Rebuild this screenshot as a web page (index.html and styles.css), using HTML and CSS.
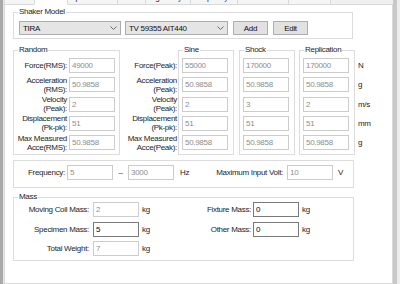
FILE: index.html
```html
<!DOCTYPE html>
<html lang="en">
<head>
    <meta charset="UTF-8">
    <meta name="viewport" content="width=device-width, initial-scale=1.0">
    <title>Shaker Settings</title>
    <link rel="stylesheet" href="styles.css">
</head>
<body>
    <div class="window">
        <div class="edge-left"></div>
        <div class="main">
            <div class="tabs">
                <div class="tab">Units</div>
                <div class="tab active">Shaker</div>
                <div class="tab">Input Channel</div>
                <div class="tab">Limits</div>
                <div class="tab">Signal Style</div>
                <div class="tab">Graph Style</div>
                <div class="tab">Measurements</div>
                <div class="tab">Tree Control</div>
                <div class="tab-fill"></div>
            </div>

            <div class="page">
                <fieldset class="group shaker">
                    <legend>Shaker Model</legend>
                    <div class="shaker-row">
                        <div class="combo combo-make">
                            <span>TIRA</span>
                            <svg width="7" height="4" viewBox="0 0 7 4"><polyline points="0.5,0.5 3.5,3.5 6.5,0.5" fill="none" stroke="#6a6a6a" stroke-width="1"/></svg>
                        </div>
                        <div class="combo combo-model">
                            <span>TV 59355 AIT440</span>
                            <svg width="7" height="4" viewBox="0 0 7 4"><polyline points="0.5,0.5 3.5,3.5 6.5,0.5" fill="none" stroke="#6a6a6a" stroke-width="1"/></svg>
                        </div>
                        <button class="btn btn-add">Add</button>
                        <button class="btn">Edit</button>
                    </div>
                </fieldset>

                <div class="ratings">
                    <fieldset class="group random">
                        <legend>Random</legend>
                        <div class="random-grid">
                            <label>Force(RMS):</label>
                            <input class="field" type="text" value="49000" disabled>
                            <label>Acceleration<br>(RMS):</label>
                            <input class="field" type="text" value="50.9858" disabled>
                            <label>Velocity<br>(Peak):</label>
                            <input class="field" type="text" value="2" disabled>
                            <label>Displacement<br>(Pk-pk):</label>
                            <input class="field" type="text" value="51" disabled>
                            <label>Max Measured<br>Acce(RMS):</label>
                            <input class="field" type="text" value="50.9858" disabled>
                        </div>
                    </fieldset>

                    <div class="side-labels">
                        <label>Force(Peak):</label>
                        <label>Acceleration<br>(Peak):</label>
                        <label>Velocity<br>(Peak):</label>
                        <label>Displacement<br>(Pk-pk):</label>
                        <label>Max Measured<br>Acce(Peak):</label>
                    </div>

                    <fieldset class="group column">
                        <legend>Sine</legend>
                        <div class="column-grid">
                            <input class="field" type="text" value="55000" disabled>
                            <input class="field" type="text" value="50.9858" disabled>
                            <input class="field" type="text" value="2" disabled>
                            <input class="field" type="text" value="51" disabled>
                            <input class="field" type="text" value="50.9858" disabled>
                        </div>
                    </fieldset>

                    <fieldset class="group column">
                        <legend>Shock</legend>
                        <div class="column-grid">
                            <input class="field" type="text" value="170000" disabled>
                            <input class="field" type="text" value="50.9858" disabled>
                            <input class="field" type="text" value="3" disabled>
                            <input class="field" type="text" value="51" disabled>
                            <input class="field" type="text" value="50.9858" disabled>
                        </div>
                    </fieldset>

                    <fieldset class="group column">
                        <legend>Replication</legend>
                        <div class="column-grid">
                            <input class="field" type="text" value="170000" disabled>
                            <input class="field" type="text" value="50.9858" disabled>
                            <input class="field" type="text" value="2" disabled>
                            <input class="field" type="text" value="51" disabled>
                            <input class="field" type="text" value="50.9858" disabled>
                        </div>
                    </fieldset>

                    <div class="units">
                        <span>N</span>
                        <span>g</span>
                        <span>m/s</span>
                        <span>mm</span>
                        <span>g</span>
                    </div>
                </div>

                <fieldset class="group frequency">
                    <div class="frequency-row">
                        <label>Frequency:</label>
                        <input class="field" type="text" value="5" disabled>
                        <span class="dash">–</span>
                        <input class="field" type="text" value="3000" disabled>
                        <span class="unit-hz">Hz</span>
                        <label>Maximum Input Volt:</label>
                        <input class="field" type="text" value="10" disabled>
                        <span class="unit-v">V</span>
                    </div>
                </fieldset>

                <fieldset class="group mass">
                    <legend>Mass</legend>
                    <div class="mass-grid">
                        <label>Moving Coil Mass:</label>
                        <input class="field" type="text" value="2" disabled>
                        <span class="kg">kg</span>
                        <label>Fixture Mass:</label>
                        <input class="field edit" type="text" value="0">
                        <span class="kg">kg</span>

                        <label>Specimen Mass:</label>
                        <input class="field edit" type="text" value="5">
                        <span class="kg">kg</span>
                        <label>Other Mass:</label>
                        <input class="field edit" type="text" value="0">
                        <span class="kg">kg</span>

                        <label>Total Weight:</label>
                        <input class="field" type="text" value="7" disabled>
                        <span class="kg">kg</span>
                    </div>
                </fieldset>
            </div>
        </div>
        <div class="edge-right"></div>
    </div>
</body>
</html>
```

FILE: styles.css
```css
body {
    margin: 0;
    font-family: "Liberation Sans", Arial, sans-serif;
    font-size: 8px;
    letter-spacing: -0.3px;
    color: #1e1e1e;
    background-color: #f0f0f0;
}

.window {
    display: flex;
    height: 284px;
    overflow: hidden;
}

.edge-left {
    width: 3px;
    background-color: #a9a9a9;
    border-right: 1px solid #e6e6e6;
}

.edge-right {
    width: 4px;
    background-color: #c8c8c8;
    border-right: 3px solid #ededed;
}

.main {
    width: 389px;
    display: flex;
    flex-direction: column;
}

/* tab strip, only its lower edge is in view */
.tabs {
    height: 5px;
    display: flex;
    align-items: flex-end;
    overflow: hidden;
}

.tab {
    flex: none;
    height: 14px;
    line-height: 12px;
    box-sizing: border-box;
    border: 1px solid #d9d9d9;
    margin-right: -1px;
    background-color: #f5f5f5;
    text-align: center;
    white-space: nowrap;
    overflow: hidden;
}

.tab.active {
    height: 16px;
    background-color: #fff;
    border-bottom-color: #fff;
    position: relative;
}

.tab:nth-child(1) { width: 31px; }
.tab:nth-child(2) { width: 34px; }
.tab:nth-child(3) { width: 51px; }
.tab:nth-child(4) { width: 29px; }
.tab:nth-child(5) { width: 46px; }
.tab:nth-child(6) { width: 48px; }
.tab:nth-child(7) { width: 52px; }
.tab:nth-child(8) { width: 43px; }

.tab-fill {
    flex: 1;
    height: 1px;
    background-color: #d9d9d9;
    margin-left: 1px;
}

.page {
    flex: 1;
    background-color: #fff;
    border: 1px solid #d9d9d9;
    border-top: none;
    padding: 2px 0 0 8px;
}

.group {
    margin: 0;
    padding: 0;
    min-width: 0;
    border: 1px solid #dcdcdc;
}

.group legend {
    margin-left: 4px;
    padding: 0 1px;
    line-height: 10px;
}

label {
    text-align: right;
    line-height: 9px;
}

.field {
    width: 46px;
    height: 15px;
    box-sizing: border-box;
    margin: 0;
    padding: 0 2px;
    border: 1px solid #cccccc;
    background-color: #fff;
    color: #8d8d8d;
    font: inherit;
    letter-spacing: inherit;
    outline: none;
}

.field.edit {
    border-color: #7a7a7a;
    color: #000;
}

/* shaker model */
.shaker {
    width: 340px;
    box-sizing: border-box;
}

.shaker-row {
    display: flex;
    align-items: center;
    padding: 4px 0 3px 5px;
}

.combo {
    height: 14px;
    box-sizing: border-box;
    border: 1px solid #acacac;
    background-color: #e5e5e5;
    display: flex;
    align-items: center;
    justify-content: space-between;
    padding: 0 3px 0 3px;
    color: #111;
}

.combo-make {
    width: 102px;
    margin-right: 4px;
}

.combo-model {
    width: 103px;
    margin-right: 5px;
}

.btn {
    width: 35px;
    height: 14px;
    padding: 0;
    border: 1px solid #adadad;
    background-color: #e1e1e1;
    font: inherit;
    letter-spacing: inherit;
    color: #111;
}

.btn-add {
    margin-right: 5px;
}

/* force / acceleration ratings */
.ratings {
    display: flex;
    align-items: flex-start;
    margin-top: 6px;
}

.random-grid {
    display: grid;
    grid-template-columns: 53px 46px;
    grid-auto-rows: 15px;
    column-gap: 2px;
    row-gap: 4.25px;
    align-items: center;
    padding: 3px 4px 4px 0;
}

.side-labels,
.units {
    display: grid;
    grid-auto-rows: 15px;
    row-gap: 4.25px;
    align-items: center;
    padding-top: 13px;
}

.side-labels {
    width: 57px;
    padding-right: 1px;
}

.column {
    margin-right: 5px;
}

.column:nth-of-type(3) {
    margin-right: 4px;
}

.column:nth-of-type(4) {
    margin-right: 3px;
}

.column-grid {
    display: grid;
    grid-auto-rows: 15px;
    row-gap: 4.25px;
    padding: 3px 5px 4px 3px;
}

/* frequency */
.frequency {
    width: 341px;
    box-sizing: border-box;
    margin-top: 5px;
}

.frequency-row {
    display: grid;
    grid-template-columns: 53px 46px 15px 46px 40px 73px 46px auto;
    align-items: center;
    padding: 4px 0 7px 0;
}

.dash {
    text-align: center;
}

.unit-hz {
    padding-left: 6px;
}

.frequency-row label {
    padding-right: 2px;
}

.frequency-row label:nth-of-type(2) {
    padding-right: 4px;
}

.unit-v {
    padding-left: 5px;
}

/* mass */
.mass {
    width: 341px;
    box-sizing: border-box;
    margin-top: 4px;
}

.mass-grid {
    display: grid;
    grid-template-columns: 79px 46px 30px 84px 46px auto;
    grid-auto-rows: 15px;
    row-gap: 4.5px;
    align-items: center;
    padding: 0 0 4px 0;
}

.mass-grid label {
    padding-right: 4px;
}

.mass-grid label:nth-of-type(even) {
    padding-right: 2px;
}

.kg {
    padding-left: 3px;
}
```
